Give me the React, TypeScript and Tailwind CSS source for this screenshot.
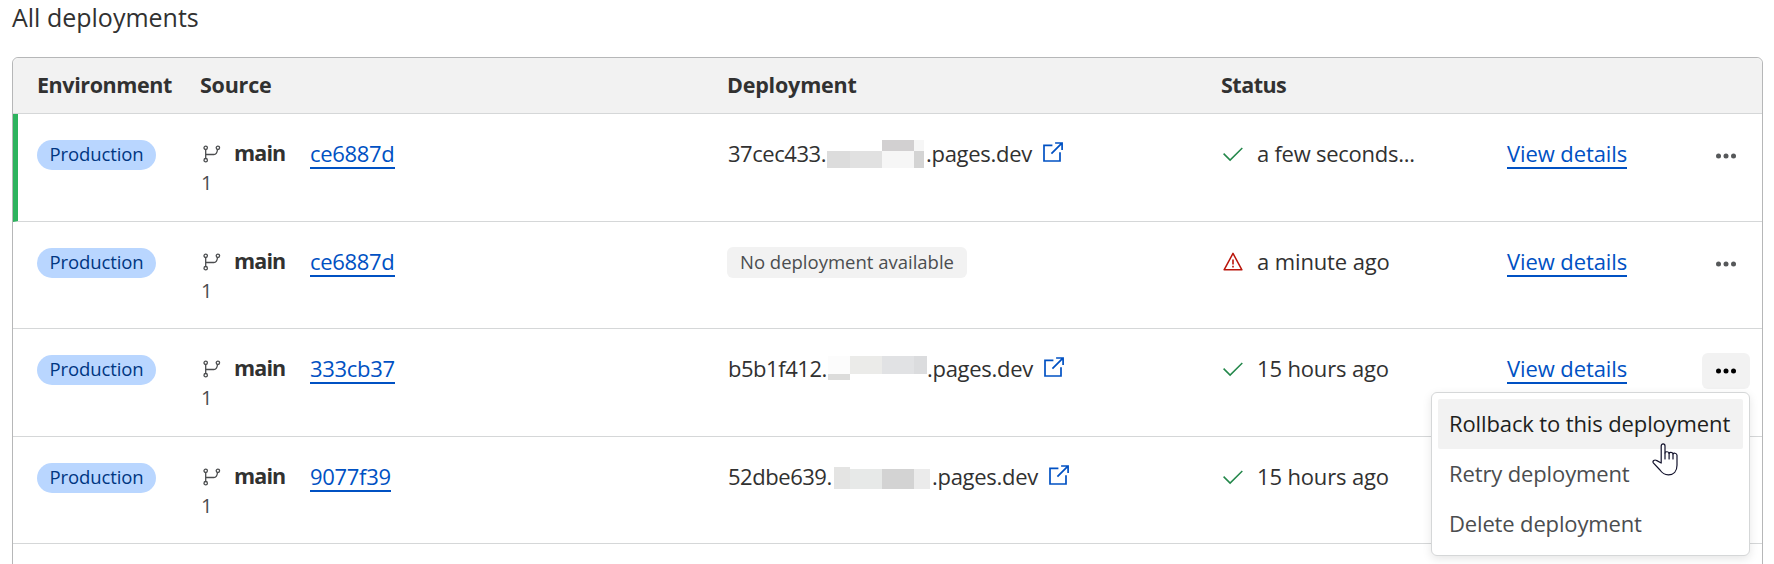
import React, { ReactNode } from "react";

type Status = "success" | "failed";

interface MosaicCell {
  width: number;
  top: number;
  height: number;
  color: string;
  left: number;
}

interface Deployment {
  commit: string;
  commitTracking: string;
  prefix?: string;
  prefixClass?: string;
  mosaic?: { width: number; cells: MosaicCell[] };
  status: Status;
  age: string;
  ageTracking: string;
  active?: boolean;
  menuOpen?: boolean;
  covered?: boolean;
  rowClass: string;
}

const deployments: Deployment[] = [
  {
    commit: "ce6887d",
    commitTracking: "tracking-[-0.31px]",
    prefix: "37cec433.",
    prefixClass: "w-[99px]",
    mosaic: {
      width: 99,
      cells: [
        { left: 0, top: 11, width: 23, height: 17, color: "#dcdcdc" },
        { left: 23, top: 11, width: 32, height: 17, color: "#e1e1e1" },
        { left: 55, top: 0, width: 32, height: 11, color: "#d2d0d1" },
        { left: 55, top: 11, width: 32, height: 17, color: "#f6f6f6" },
        { left: 87, top: 0, width: 10, height: 11, color: "#f6f6f6" },
        { left: 87, top: 11, width: 10, height: 17, color: "#d4d4d4" },
      ],
    },
    status: "success",
    age: "a few seconds...",
    ageTracking: "tracking-[-0.25px]",
    active: true,
    rowClass: "h-[108px]",
  },
  {
    commit: "ce6887d",
    commitTracking: "tracking-[-0.31px]",
    status: "failed",
    age: "a minute ago",
    ageTracking: "tracking-[-0.12px]",
    rowClass: "h-[107px]",
  },
  {
    commit: "333cb37",
    commitTracking: "tracking-[-0.31px]",
    prefix: "b5b1f412.",
    prefixClass: "w-[100px]",
    mosaic: {
      width: 99,
      cells: [
        { left: 0, top: 1, width: 22, height: 18, color: "#fcfcfc" },
        { left: 0, top: 19, width: 22, height: 6, color: "#dcdcdb" },
        { left: 22, top: 1, width: 32, height: 18, color: "#ebebe9" },
        { left: 54, top: 1, width: 32, height: 18, color: "#e1e2e4" },
        { left: 86, top: 1, width: 13, height: 18, color: "#dbdcde" },
      ],
    },
    status: "success",
    age: "15 hours ago",
    ageTracking: "tracking-[-0.15px]",
    menuOpen: true,
    rowClass: "h-[108px]",
  },
  {
    commit: "9077f39",
    commitTracking: "tracking-[-0.31px]",
    prefix: "52dbe639.",
    prefixClass: "w-[106px]",
    mosaic: {
      width: 98,
      cells: [
        { left: 0, top: 4, width: 16, height: 22, color: "#e4e4e3" },
        { left: 16, top: 6, width: 32, height: 20, color: "#e7e9e8" },
        { left: 48, top: 6, width: 32, height: 20, color: "#d3d3d3" },
        { left: 80, top: 6, width: 16, height: 20, color: "#ebebeb" },
      ],
    },
    status: "success",
    age: "15 hours ago",
    ageTracking: "tracking-[-0.15px]",
    covered: true,
    rowClass: "h-[107px]",
  },
];

const columns = "grid grid-cols-[163px_527px_493px_287px_auto]";

function BranchIcon() {
  return (
    <svg width="18" height="18" viewBox="0 0 18 18" fill="none" stroke="#4b4d4f" strokeWidth="1.3">
      <circle cx="2.7" cy="2.8" r="1.7" />
      <circle cx="14.9" cy="2.8" r="1.7" />
      <circle cx="2.7" cy="15.2" r="1.7" />
      <path d="M2.7 4.5v9M2.7 9.5h8.2c2.200 0 3.200-1.400 3.600-5" />
    </svg>
  );
}

function ExternalIcon() {
  return (
    <svg width="20" height="20" viewBox="0 0 20 20" fill="none" stroke="#0051c3" strokeWidth="1.7">
      <path d="M9.4 3.4H1v15.6h16V10.2" />
      <path d="M8.4 11.7 18.9 1.2M12.1 1h7v7" />
    </svg>
  );
}

function CheckIcon() {
  return (
    <svg width="20" height="20" viewBox="0 0 20 20" fill="none" stroke="#23874a" strokeWidth="1.5">
      <path d="M.6 9.600 7.100 16.100 19.300 4" />
    </svg>
  );
}

function WarningIcon() {
  return (
    <svg width="20" height="20" viewBox="0 0 20 20" fill="none" stroke="#b9150b" strokeWidth="1.5">
      <path d="M10 1.400 18.900 17.800H1.100Z" strokeLinejoin="round" />
      <path d="M10 7.400v5.200M10 13.800v1.800" strokeWidth="1.600" />
    </svg>
  );
}

function DotsIcon() {
  return (
    <svg width="20" height="6" viewBox="0 0 20 6" fill="currentColor">
      <circle cx="2.5" cy="3" r="2.5" />
      <circle cx="10" cy="3" r="2.5" />
      <circle cx="17.5" cy="3" r="2.5" />
    </svg>
  );
}

function HandCursor() {
  return (
    <svg
      className="absolute top-[50px] left-[220px]"
      width="26"
      height="33"
      viewBox="0 0 26 33"
      fill="#fff"
      stroke="#11112b"
      strokeWidth="1.2"
      strokeLinejoin="round"
      strokeLinecap="round"
    >
      <path d="M9.2 20V3C9.2 .2 13 .2 13 3v7c0-1.800 4.100-1.700 4.100.4 0-1.500 3.900-1.300 3.900.6 0-1.300 4-1.100 4 1.300v9.900c0 6-3.400 9.600-8.600 9.600-4.200 0-6.400-1.800-8.400-4.800L1.300 19.800C.2 18 2.600 16.300 4.400 17.400Z" />
      <path d="M13 10v6M17.100 10.400v5.600M21 11v5" fill="none" />
    </svg>
  );
}

function TextLink({ className, children }: { className: string; children: ReactNode }) {
  return (
    <a href="#" className={`border-b-2 border-[#0051c3] leading-[28px] text-[#0051c3] ${className}`}>
      {children}
    </a>
  );
}

function ActionsMenu() {
  return (
    <div className="absolute top-[39px] right-0 z-10 h-[164px] w-[319px] rounded-md border border-[#d5d7d8] bg-white px-[6px] py-[6px] leading-[30px] shadow-[0_3px_10px_rgba(0,0,0,0.1)]">
      <div className="h-[50px] rounded-[2px] bg-[#f2f2f2] pt-[9px] pl-[11px] tracking-[-0.12px] whitespace-nowrap text-[#1d1f20]">
        Rollback to this deployment
      </div>
      <div className="h-[50px] pt-[9px] pl-[11px] tracking-[-0.13px] text-[#4b4d4f]">Retry deployment</div>
      <div className="h-[50px] pt-[9px] pl-[11px] tracking-[-0.15px] text-[#4b4d4f]">Delete deployment</div>
      <HandCursor />
    </div>
  );
}

function Row({ item }: { item: Deployment }) {
  return (
    <div
      className={`${columns} ${item.rowClass} border-b border-[#d5d7d8] ${
        item.active ? "border-l-5 border-l-[#2db35e] pl-[19px]" : "pl-6"
      }`}
    >
      <div className="pt-[26px]">
        <span className="flex h-[30px] w-[119px] items-center justify-center rounded-full bg-[#b9d6ff] pb-[2px] text-[18.5px] tracking-[-0.11px] text-[#003682]">
          Production
        </span>
      </div>
      <div className="pt-[25px] pl-[2px]">
        <div className="flex h-[30px] items-start">
          <span className="mt-[6px] ml-[1px]">
            <BranchIcon />
          </span>
          <span className="ml-[13px] w-[76px] text-[21.5px] leading-[28px] font-bold tracking-[-0.85px]">main</span>
          <TextLink className={item.commitTracking}>{item.commit}</TextLink>
        </div>
        <div className="-ml-px text-[20px] leading-[27px] text-[#4b4d4f]">1</div>
      </div>
      <div className="pt-[25px]">
        {item.mosaic ? (
          <div className="ml-px flex items-start leading-[28px]">
            <span className={`tracking-[-0.46px] ${item.prefixClass}`}>{item.prefix}</span>
            <svg className="mt-[1px]" width={item.mosaic.width} height="28" shapeRendering="crispEdges">
              {item.mosaic.cells.map((c, i) => (
                <rect key={i} x={c.left} y={c.top} width={c.width} height={c.height} fill={c.color} />
              ))}
            </svg>
            <span className="tracking-[-0.28px]">.pages.dev</span>
            <span className="mt-[3px] ml-[11px]">
              <ExternalIcon />
            </span>
          </div>
        ) : (
          <span className="flex h-[31px] w-[240px] items-center justify-center rounded-md bg-[#f2f2f2] pb-[2px] text-[18.5px] text-[#4b4d4f]">
            No deployment available
          </span>
        )}
      </div>
      <div className="flex items-start pt-[25px] pl-[3px] leading-[28px]">
        <span className="mt-[5px] mr-[14px]">{item.status === "success" ? <CheckIcon /> : <WarningIcon />}</span>
        <span className={item.ageTracking}>{item.age}</span>
      </div>
      {!item.covered && (
        <div className="flex items-start justify-between pt-[25px] pr-[12px]">
          <TextLink className="tracking-[-0.1px]">View details</TextLink>
          <div className="relative -mt-px">
            <button
              className={`flex h-9 w-12 items-center justify-center rounded-md ${
                item.menuOpen ? "bg-[#f2f2f2] text-black" : "text-[#56585a]"
              }`}
            >
              <DotsIcon />
            </button>
            {item.menuOpen && <ActionsMenu />}
          </div>
        </div>
      )}
    </div>
  );
}

export default function App() {
  return (
    <div className="h-[564px] overflow-hidden bg-white pr-[11px] pl-3 font-['Open_Sans',sans-serif] text-[22px] text-[#313131]">
      <h2 className="h-[57px] text-[25px] leading-[35px]">All deployments</h2>
      <div className="h-[560px] rounded-md border border-[#b6b7b8]">
        <div
          className={`${columns} h-14 items-center rounded-t-md border-b border-[#d5d7d8] bg-[#f2f2f2] pb-[1px] pl-6 text-[21.5px] font-bold`}
        >
          <div className="tracking-[-0.42px]">Environment</div>
          <div className="tracking-[-0.22px]">Source</div>
          <div className="tracking-[-0.2px]">Deployment</div>
          <div className="pl-px tracking-[-0.5px]">Status</div>
        </div>
        {deployments.map((item, i) => (
          <Row key={i} item={item} />
        ))}
      </div>
    </div>
  );
}
